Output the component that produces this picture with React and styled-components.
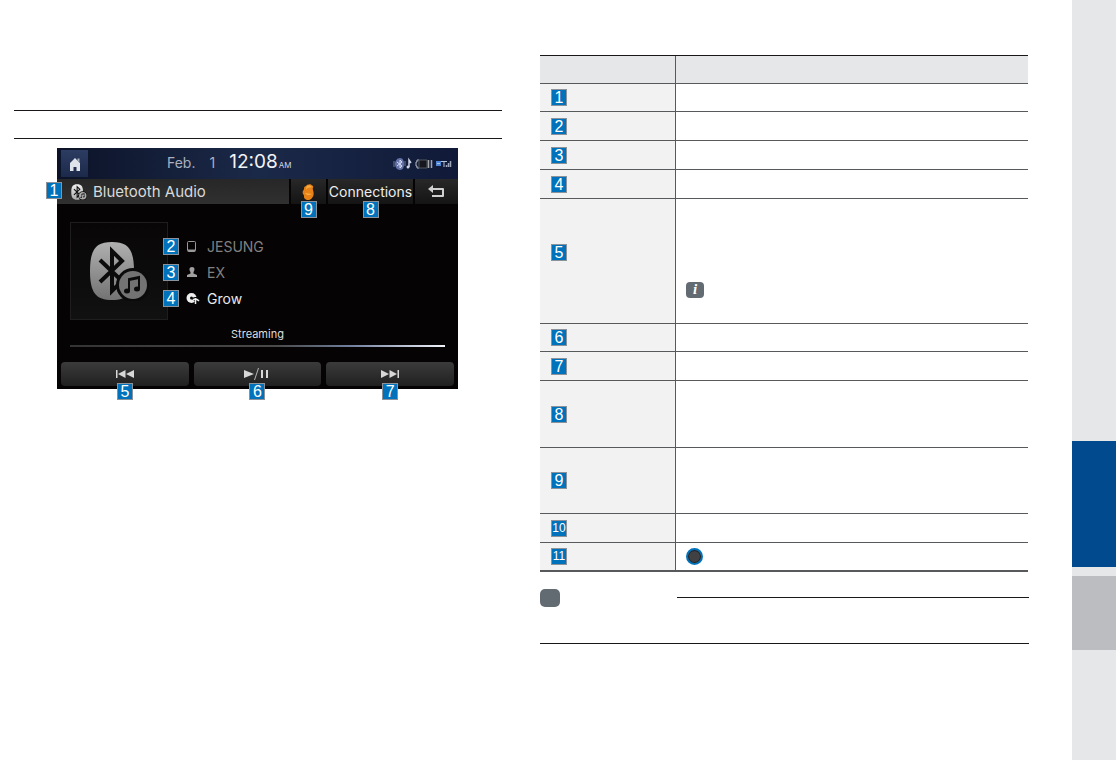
import styled, { createGlobalStyle, css } from "styled-components";

const rows = [
  { id: 1, height: 28 },
  { id: 2, height: 29 },
  { id: 3, height: 29 },
  { id: 4, height: 29 },
  { id: 5, height: 125, extra: "info" },
  { id: 6, height: 28 },
  { id: 7, height: 29 },
  { id: 8, height: 67 },
  { id: 9, height: 66 },
  { id: 10, height: 29 },
  { id: 11, height: 28, extra: "dial" },
];

function HomeIcon() {
  return (
    <svg width="14" height="16" viewBox="0 0 14 16" aria-hidden="true">
      <path d="M7 2 2 7v8h3.500v-4h3v4H12V7z" fill="#dfe3ea" />
      <path d="M9.500 2.500h2v4l-2-2z" fill="#aab0bd" />
    </svg>
  );
}

function BluetoothAudioIcon({ size, fill, stroke }) {
  return (
    <svg width={size} height={size} viewBox="0 0 60 60" aria-hidden="true">
      <defs>
        <linearGradient id={"bt" + size} x1="0" y1="0" x2="0" y2="1">
          <stop offset="0" stopColor={fill} />
          <stop offset="1" stopColor={stroke} />
        </linearGradient>
      </defs>
      <path
        d="M23 1C39 1 45 8 45 30S39 59 23 59 1 52 1 30 7 1 23 1z"
        fill={"url(#bt" + size + ")"}
      />
      <path
        d="M11 19 33 40 23 50V10l10 10-22 21"
        fill="none"
        stroke="#0b0b0b"
        strokeWidth="4"
      />
      <circle cx="44" cy="44" r="17" fill="#0b0b0b" />
      <circle cx="44" cy="44" r="14" fill={stroke} />
      <path d="M40 50V38l10-2v12M40 39l10-2" fill="none" stroke="#0b0b0b" strokeWidth="2" />
      <ellipse cx="38" cy="50" rx="3" ry="2.500" fill="#0b0b0b" />
      <ellipse cx="48" cy="48" rx="3" ry="2.500" fill="#0b0b0b" />
    </svg>
  );
}

function StatusIcons() {
  return (
    <svg width="60" height="14" viewBox="0 0 60 14" aria-hidden="true">
      <path d="M7 1C10 1 11 4 11 7s-1 6-4 6-5-3-5-6 2-6 5-6z" fill="#6472a8" />
      <path d="M4 5l5 4-2 2V3l2 2-5 4" fill="none" stroke="#d4dbf5" />
      <path d="M1 4v6M12 4v5" stroke="#6b77a0" />
      <path d="M16 10V3l2 3" fill="none" stroke="#cfd4e6" strokeWidth="1.500" />
      <circle cx="15" cy="10" r="1.500" fill="#cfd4e6" />
      <path d="M26 3h-2v2h-1v4h1v2h2" fill="none" stroke="#b5b8c2" />
      <path d="M26 3h8v8h-8z" fill="#16161c" stroke="#55565e" />
      <path d="M35.500 3v8M38.500 3v8" stroke="#a5a6ad" strokeWidth="1.500" />
      <path d="M43 4h5v5h-5z" fill="#4e83cf" />
      <path d="M44 6.500h3M48 4.500h6M51 4.500V10" stroke="#b4c2da" />
      <path d="M53.500 10V8M55.500 10V6M57.500 10V4" stroke="#9da6ba" strokeWidth="1.500" />
    </svg>
  );
}

function HeadIcon() {
  return (
    <svg width="13" height="18" viewBox="0 0 13 18" aria-hidden="true">
      <path
        d="M4 3c1-2 3-1 4-2l3 2c1 1-1 2 0 4 1 3 1 6-1 8-2 3-6 2-7 1-2-2 0-3-2-5-1-3 1-4 1-5 0-2 0-2 2-3z"
        fill="#e58118"
      />
      <path d="M5 3c2-1 4 0 5 1-2 1-5 0-6 3 0-1 0-3 1-4zM3 10c2 3 5 2 7 1" fill="#f9ae3f" />
    </svg>
  );
}

function BackIcon() {
  return (
    <svg width="17" height="13" viewBox="0 0 17 13" aria-hidden="true">
      <path d="M3 4h12v7H4" fill="none" stroke="#cfcfcf" strokeWidth="2" strokeLinejoin="round" />
      <path d="M0 4l5-4v8z" fill="#cfcfcf" />
    </svg>
  );
}

function PhoneIcon() {
  return (
    <svg width="12" height="12" viewBox="0 0 12 12" aria-hidden="true">
      <rect x="1.500" y="1.500" width="8" height="10" rx="1" fill="none" stroke="#999" />
      <path d="M2 10.500h7" stroke="#999" strokeWidth="2" />
    </svg>
  );
}

function ArtistIcon() {
  return (
    <svg width="12" height="12" viewBox="0 0 12 12" aria-hidden="true">
      <path
        d="M6 1c3 0 3 3 1.500 5v1.500L11 9v2H1V9l3.500-1.500V6C3 4 3 1 6 1z"
        fill="#a0a0a0"
      />
    </svg>
  );
}

function SongIcon() {
  return (
    <svg width="14" height="13" viewBox="0 0 14 13" aria-hidden="true">
      <circle cx="5.500" cy="6" r="5" fill="#eee" />
      <circle cx="5.500" cy="6" r="1.500" fill="#080808" />
      <path d="M10 13V5M7 8c1-2 5-2 6 1" fill="none" stroke="#080808" strokeWidth="3" />
      <path d="M9.500 12V6M7 8c2-2 4-1 6 1" fill="none" stroke="#eee" strokeWidth="1.500" />
    </svg>
  );
}

function PreviousIcon() {
  return (
    <svg width="18" height="8" viewBox="0 0 18 8" aria-hidden="true">
      <path d="M0 0h1.500v8H0zM9.500 0v8L2 4zM18 0v8l-8-4z" fill="#d8d8d8" />
    </svg>
  );
}

function PlayPauseIcon() {
  return (
    <svg width="26" height="12" viewBox="0 0 26 12" aria-hidden="true">
      <path d="M0 2l10 4-10 4zM17 2h2v8h-2zM22 2h2v8h-2z" fill="#d8d8d8" />
      <path d="M10.500 12l4-12" stroke="#b5b5b5" />
    </svg>
  );
}

function NextIcon() {
  return (
    <svg width="18" height="8" viewBox="0 0 18 8" aria-hidden="true">
      <path d="M0 0l8 4-8 4zM8.500 0l7.500 4-7.500 4zM16.500 0H18v8h-1.500z" fill="#d8d8d8" />
    </svg>
  );
}

export default function App() {
  return (
    <>
      <GlobalStyle />
      <Page>
        <Column>
          <TitleBand />
          <Screen>
            <TopBar>
              <HomeButton aria-label="Home"><HomeIcon /></HomeButton>
              <Clock>
                <span>Feb.</span>
                <span>1</span>
                <Time>12:08<Meridiem>AM</Meridiem></Time>
              </Clock>
              <StatusIcons />
            </TopBar>
            <MenuBar>
              <SourceName>
                <BluetoothAudioIcon size={16} fill="#eeeeee" stroke="#aaaaaa" />
                Bluetooth Audio
                <Callout $place="source">1</Callout>
              </SourceName>
              <MenuButton aria-label="Voice">
                <HeadIcon />
                <Callout $place="below">9</Callout>
              </MenuButton>
              <MenuButton>
                Connections
                <Callout $place="below">8</Callout>
              </MenuButton>
              <MenuButton aria-label="Back"><BackIcon /></MenuButton>
            </MenuBar>
            <NowPlaying>
              <Cover>
                <BluetoothAudioIcon size={60} fill="#b0b0b0" stroke="#737373" />
              </Cover>
              <TrackList>
                <TrackLine><Badge>2</Badge><PhoneIcon />JESUNG</TrackLine>
                <TrackLine><Badge>3</Badge><ArtistIcon />EX</TrackLine>
                <TrackLine $active><Badge>4</Badge><SongIcon />Grow</TrackLine>
              </TrackList>
            </NowPlaying>
            <Streaming>Streaming</Streaming>
            <Progress />
            <Controls>
              <ControlButton aria-label="Previous">
                <PreviousIcon />
                <Callout $place="control">5</Callout>
              </ControlButton>
              <ControlButton aria-label="Play or pause">
                <PlayPauseIcon />
                <Callout $place="control">6</Callout>
              </ControlButton>
              <ControlButton aria-label="Next">
                <NextIcon />
                <Callout $place="control">7</Callout>
              </ControlButton>
            </Controls>
          </Screen>
        </Column>
        <Column>
          <Table>
            <thead>
              <tr><HeadCell $label /><HeadCell /></tr>
            </thead>
            <tbody>
              {rows.map((row) => (
                <Row key={row.id} $height={row.height}>
                  <LabelCell $raised={row.extra === "info"}>
                    <Badge $small={row.id > 9}>{row.id}</Badge>
                  </LabelCell>
                  <TextCell $low={row.extra === "info"}>
                    {row.extra === "info" && <InfoMark>i</InfoMark>}
                    {row.extra === "dial" && <Dial />}
                  </TextCell>
                </Row>
              ))}
            </tbody>
          </Table>
          <Note>
            <NoteMark />
            <NoteRule />
          </Note>
        </Column>
        <TabStrip>
          <ChapterTab />
          <SectionTab />
        </TabStrip>
      </Page>
    </>
  );
}

const GlobalStyle = createGlobalStyle`
  * {
    box-sizing: border-box;
  }
  body {
    margin: 0;
    background: #fff;
    font-family: "Liberation Sans", Arial, sans-serif;
  }
  button {
    border: 0;
    padding: 0;
    font: inherit;
    color: inherit;
    cursor: pointer;
  }
  svg {
    display: block;
    flex: none;
  }
`;

const Page = styled.main`
  display: grid;
  grid-template-columns: 1fr 1fr 50px;
  column-gap: 38px;
  min-height: 100vh;
  padding-left: 14px;
`;

const Column = styled.section`
  min-width: 0;
  padding-top: 55px;
`;

const TitleBand = styled.div`
  height: 29px;
  margin-top: 55px;
  border-top: 1px solid #1a1718;
  border-bottom: 1px solid #1a1718;
`;

const Screen = styled.div`
  width: 401px;
  margin: 9px 0 0 43px;
  background: #050303;
  color: #d9d9d9;
  font-family: Inter, "Liberation Sans", sans-serif;
`;

const TopBar = styled.header`
  display: flex;
  align-items: center;
  height: 31px;
  padding: 0 5px 0 4px;
  background: linear-gradient(90deg, #0c1328, #1b2948 50%, #101a38);
`;

const HomeButton = styled.button`
  display: grid;
  place-items: center;
  width: 27px;
  height: 27px;
  background: linear-gradient(#2c3c62, #1c294a);
`;

const Clock = styled.div`
  display: flex;
  align-items: baseline;
  gap: 14px;
  margin: 0 auto 0 79px;
  color: #aab0c0;
  font-size: 14px;
  line-height: 24px;
`;

const Time = styled.span`
  color: #f2f3f7;
  font-size: 19px;
`;

const Meridiem = styled.span`
  margin-left: 1px;
  color: #d5d8e0;
  font-size: 8px;
`;

const MenuBar = styled.div`
  display: grid;
  grid-template-columns: 1fr 35px 85px 43px;
  column-gap: 2px;
  height: 25px;
  font-size: 14px;
`;

const SourceName = styled.div`
  position: relative;
  display: flex;
  align-items: center;
  gap: 6px;
  padding-left: 14px;
  background: linear-gradient(#272727, #303030);
  font-size: 15px;
`;

const MenuButton = styled.button`
  position: relative;
  display: grid;
  place-items: center;
  background: linear-gradient(#282828, #141414);
  color: #eee;
`;

const NowPlaying = styled.div`
  display: flex;
  height: 117px;
  padding: 18px 13px 0;
`;

const Cover = styled.div`
  display: grid;
  place-items: center;
  width: 98px;
  height: 98px;
  border: 1px solid #1e1e1e;
  background: linear-gradient(#080606, #111);
`;

const TrackList = styled.div`
  padding-top: 11px;
`;

const TrackLine = styled.div`
  display: grid;
  grid-template-columns: 16px 14px 1fr;
  column-gap: 7px;
  align-items: center;
  height: 26px;
  margin-left: -5px;
  color: ${({ $active }) => ($active ? "#e8e8e8" : "#808080")};
  font-size: 14px;
`;

const Streaming = styled.div`
  height: 22px;
  padding-top: 5px;
  color: #dedede;
  font-size: 11px;
  line-height: 16px;
  text-align: center;
`;

const Progress = styled.div`
  height: 2px;
  margin: 2px 13px 15px;
  background: linear-gradient(90deg, #343434, #4a4a4a 55%, #71809f 75%, #f2f4fa);
`;

const Controls = styled.div`
  display: grid;
  grid-template-columns: repeat(3, 1fr);
  column-gap: 5px;
  padding: 0 4px 3px;
`;

const ControlButton = styled.button`
  position: relative;
  display: grid;
  place-items: center;
  height: 24px;
  border-radius: 4px;
  background: linear-gradient(#3b3b3b, #202020);
`;

const Badge = styled.span`
  display: block;
  width: 16px;
  height: 17px;
  border: 1px solid #8b9299;
  background: #0072bc;
  color: #fff;
  font-family: "Liberation Sans", Arial, sans-serif;
  font-size: ${({ $small }) => ($small ? 12 : 16)}px;
  line-height: 15px;
  text-align: center;
`;

const places = {
  source: css`
    top: 3px;
    left: -11px;
  `,
  below: css`
    top: 22px;
    left: calc(50% - 8px);
  `,
  control: css`
    top: 21px;
    left: calc(50% - 8px);
  `,
};

const Callout = styled(Badge)`
  position: absolute;
  ${({ $place }) => places[$place]}
`;

const Table = styled.table`
  width: 100%;
  border-top: 1px solid #1a1718;
  border-bottom: 1px solid #58595b;
  border-spacing: 0;
  table-layout: fixed;
`;

const HeadCell = styled.th`
  width: ${({ $label }) => ($label ? "136px" : "auto")};
  height: 28px;
  padding: 0;
  border-right: ${({ $label }) => ($label ? "1px solid #58595b" : "0")};
  border-bottom: 1px solid #58595b;
  background: #e6e7e8;
`;

const Row = styled.tr`
  height: ${({ $height }) => $height}px;
`;

const LabelCell = styled.td`
  padding: 0 11px ${({ $raised }) => ($raised ? 18 : 0)}px;
  border-right: 1px solid #58595b;
  border-bottom: 1px solid #58595b;
  background: #f2f2f2;
`;

const TextCell = styled.td`
  padding: 0 10px ${({ $low }) => ($low ? 25 : 0)}px;
  border-bottom: 1px solid #58595b;
  vertical-align: ${({ $low }) => ($low ? "bottom" : "middle")};
`;

const InfoMark = styled.span`
  display: block;
  width: 18px;
  height: 16px;
  border-radius: 4px;
  background: #626a72;
  color: #fff;
  font: italic bold 15px/15px "Liberation Serif", serif;
  text-align: center;
`;

const Dial = styled.div`
  width: 17px;
  height: 17px;
  border: 2px solid #0072bc;
  border-radius: 50%;
  background: #414042;
  box-shadow: inset 0 0 0 1px #231f20;
`;

const Note = styled.aside`
  display: flex;
  justify-content: space-between;
  height: 72px;
  margin-right: -1px;
  padding-top: 17px;
  border-bottom: 1px solid #1a1718;
`;

const NoteMark = styled.span`
  width: 20px;
  height: 18px;
  border-radius: 5px;
  background: #626a72;
`;

const NoteRule = styled.hr`
  width: 352px;
  height: 1px;
  margin: 8px 0 0;
  border: 0;
  background: #1a1718;
`;

const TabStrip = styled.aside`
  display: flex;
  flex-direction: column;
  gap: 9px;
  margin-left: 6px;
  padding-top: 441px;
  background: #e6e7e8;
`;

const ChapterTab = styled.div`
  height: 126px;
  background: #004a8d;
`;

const SectionTab = styled.div`
  height: 74px;
  background: #bcbdc0;
`;
